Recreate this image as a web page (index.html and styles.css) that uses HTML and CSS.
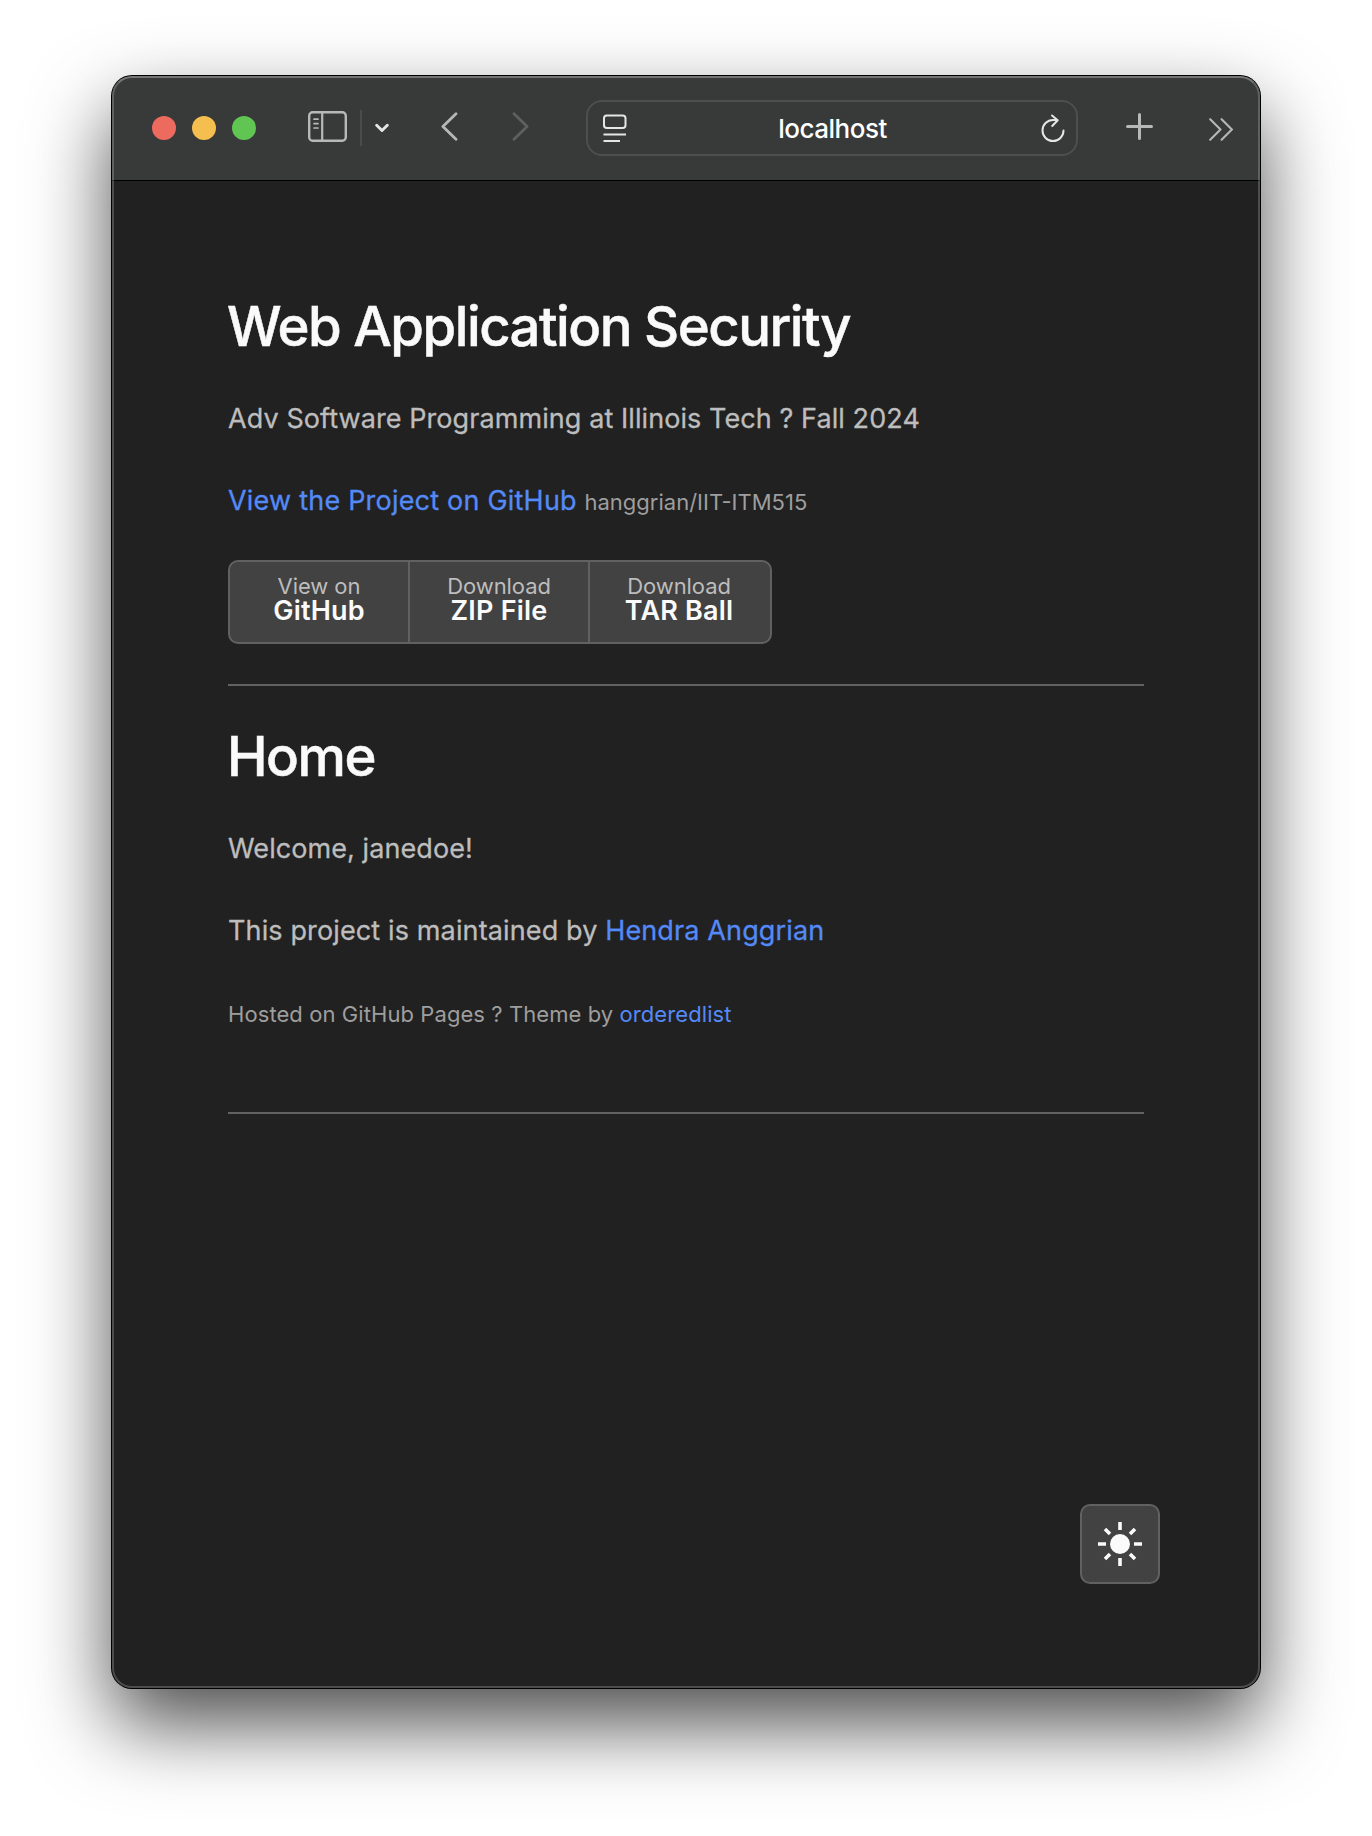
FILE: index.html
```html
<!DOCTYPE html>
<html lang="en">
<head>
<meta charset="utf-8">
<title>Web Application Security</title>
<link rel="stylesheet" href="styles.css">
</head>
<body>
<main class="window">
  <header class="toolbar">
    <div class="lights">
      <span class="light light-close"></span>
      <span class="light light-min"></span>
      <span class="light light-max"></span>
    </div>
    <svg class="icon sidebar" width="39" height="31" viewBox="0 0 39 31" fill="none" stroke="#b7b9b8"><rect x="1.200" y="1.200" width="36.600" height="28.600" rx="3.500" stroke-width="2.400"/><path d="M14.200 1v29" stroke-width="2.200"/><path d="M6 8.200h4M6 12.600h4M6 17h4" stroke-width="1.700" stroke-linecap="round"/></svg>
    <span class="divider"></span>
    <svg class="icon caret" width="14" height="10" viewBox="0 0 14 10" fill="none"><path d="M1.700 2.200L7 7.500L12.300 2.200" stroke="#e4e5e5" stroke-width="2.900" stroke-linecap="round" stroke-linejoin="round"/></svg>
    <svg class="icon back" width="17" height="29" viewBox="0 0 17 29" fill="none"><path d="M15 1.700L1.900 14.500L15 27.300" stroke="#b5b7b6" stroke-width="2.800" stroke-linecap="round" stroke-linejoin="round"/></svg>
    <svg class="icon forward" width="17" height="29" viewBox="0 0 17 29" fill="none"><path d="M2 1.700L15.100 14.500L2 27.300" stroke="#5e605f" stroke-width="2.800" stroke-linecap="round" stroke-linejoin="round"/></svg>
    <div class="address">
      <svg class="icon" width="24" height="28" viewBox="0 0 24 28" fill="none" stroke="#e4e6e5" stroke-width="2"><rect x="1" y="1.500" width="21.500" height="12.500" rx="2.800"/><path d="M.5 20.500h22.500M.5 27h16.500"/></svg>
      <span class="host">localhost</span>
      <svg class="icon" width="24" height="28" viewBox="0 0 24 28" fill="none" stroke="#e4e6e5" stroke-width="2" stroke-linecap="round" stroke-linejoin="round"><path d="M22.500 16.500A10.500 10.500 0 1 1 12 6H16.500M11 1.500L16.700 6.300L11.200 12"/></svg>
    </div>
    <svg class="icon plus" width="27" height="27" viewBox="0 0 27 27"><path d="M13.500 1.500v24M1.500 13.500h24" stroke="#b7b9b8" stroke-width="3" stroke-linecap="round"/></svg>
    <svg class="icon more" width="24" height="23" viewBox="0 0 24 23" fill="none" stroke="#b5b7b6" stroke-width="2.100" stroke-linecap="round" stroke-linejoin="round"><path d="M1.200 1.200L11.500 11.500L1.200 21.800M12.600 1.200L22.900 11.500L12.600 21.800"/></svg>
  </header>
  <div class="page">
    <h1 class="title">Web Application Security</h1>
    <p class="text">Adv Software Programming at Illinois Tech ? Fall 2024</p>
    <p class="text"><a class="link link-wide">View the Project on GitHub</a> <small class="small repo">hanggrian/IIT-ITM515</small></p>
    <nav class="downloads">
      <a class="download">View on<strong>GitHub</strong></a>
      <a class="download">Download<strong>ZIP File</strong></a>
      <a class="download">Download<strong>TAR Ball</strong></a>
    </nav>
    <hr class="rule">
    <h1 class="title">Home</h1>
    <p class="text">Welcome, janedoe!</p>
    <p class="text maintainer">This project is maintained by <a class="link">Hendra Anggrian</a></p>
    <p class="text credits"><small class="small">Hosted on GitHub Pages ? Theme by <a class="link">orderedlist</a></small></p>
    <hr class="rule">
  </div>
  <button class="theme" aria-label="Toggle theme">
    <svg class="icon" width="46" height="46" viewBox="-23 -23 46 46" stroke="#fafafa" stroke-width="3.600"><circle r="10" fill="#fafafa" stroke="none"/><path d="M0-22v8M0 14v8M-22 0h8M14 0h8M-15-15l5 5M10 10l5 5M15-15l-5 5M-10 10l-5 5"/></svg>
  </button>
</main>
</body>
</html>
```
FILE: styles.css
```css
* { box-sizing: border-box; }
body {
  margin: 0;
  padding: 76px 112px 0;
  height: 1836px;
  overflow: hidden;
  background: #fff;
  font-family: Inter, "Liberation Sans", sans-serif;
}
.icon { display: block; flex: none; }

/* Window frame */
.window {
  position: relative;
  height: 1612px;
  border-radius: 20px;
  background: #212121;
  color: #bdbdbd;
  box-shadow: 0 0 0 1px #000, 0 36px 80px rgba(0, 0, 0, .7);
}
.window::after {
  content: "";
  position: absolute;
  inset: 0;
  border: 2px solid rgba(255, 255, 255, .2);
  border-top-color: rgba(255, 255, 255, .3);
  border-radius: 20px;
  pointer-events: none;
}

/* Toolbar */
.toolbar {
  display: flex;
  align-items: flex-start;
  height: 105px;
  border-bottom: 1px solid #000;
  border-radius: 20px 20px 0 0;
  background: #383a39;
}
.lights { display: flex; gap: 16px; margin: 40px 0 0 40px; }
.light { width: 24px; height: 24px; border-radius: 50%; }
.light-close { background: #ed6a5e; }
.light-min { background: #f5bf4f; }
.light-max { background: #61c554; }
.sidebar { margin: 35px 0 0 52px; }
.divider { width: 2px; height: 36px; margin: 34px 0 0 13px; background: #4a4b4a; }
.caret { margin: 47px 0 0 13px; }
.back { margin: 36px 0 0 52px; }
.forward { margin: 36px 0 0 54px; }
.address {
  display: flex;
  align-items: center;
  justify-content: space-between;
  width: 492px;
  height: 56px;
  margin: 24px 0 0 57px;
  padding: 0 11px 0 15px;
  border: 2px solid #4d4f4e;
  border-radius: 16px;
}
.host { padding-right: 3px; color: #fff; font-size: 26px; font-weight: 500; letter-spacing: -.500px; }
.plus { margin: 37px 0 0 48px; }
.more { margin: 42px 0 0 56px; }

/* Page */
.page { padding: 115px 116px 0; }
.title {
  margin: 0 0 42px -1px;
  color: #fafafa;
  font-size: 54.500px;
  font-weight: 500;
  line-height: 60px;
  letter-spacing: -1.500px;
  -webkit-text-stroke: .500px;
}
.text {
  margin: 0 0 40px;
  font-size: 27px;
  line-height: 42px;
  letter-spacing: .080px;
  -webkit-text-stroke: .300px;
}
.maintainer { letter-spacing: .130px; }
.small {
  color: #9e9e9e;
  font-size: 22px;
  line-height: 1;
  letter-spacing: .080px;
  -webkit-text-stroke: 0;
}
.repo { letter-spacing: 0; }
.link { color: #548af7; }
.link-wide { letter-spacing: .210px; }
.downloads {
  display: flex;
  width: 544px;
  height: 84px;
  margin-top: -2px;
  border: 2px solid #616161;
  border-radius: 10px;
  background: #424242;
}
.download {
  flex: 0 0 180px;
  padding-top: 11px;
  border-right: 2px solid #616161;
  font-size: 22px;
  line-height: 26px;
  letter-spacing: -.080px;
  text-align: center;
}
.download:last-child { border-right-color: transparent; }
.download strong {
  display: block;
  color: #fafafa;
  font-size: 27px;
  font-weight: 600;
  line-height: 23px;
  letter-spacing: .200px;
}
.rule { height: 2px; margin: 40px 0; border: 0; background: #616161; }
.credits { margin: 40px 0 78px; }

/* Floating theme toggle */
.theme {
  position: absolute;
  right: 100px;
  bottom: 104px;
  display: grid;
  place-items: center;
  width: 80px;
  height: 80px;
  padding: 0;
  border: 2px solid #616161;
  border-radius: 10px;
  background: #424242;
}
```
